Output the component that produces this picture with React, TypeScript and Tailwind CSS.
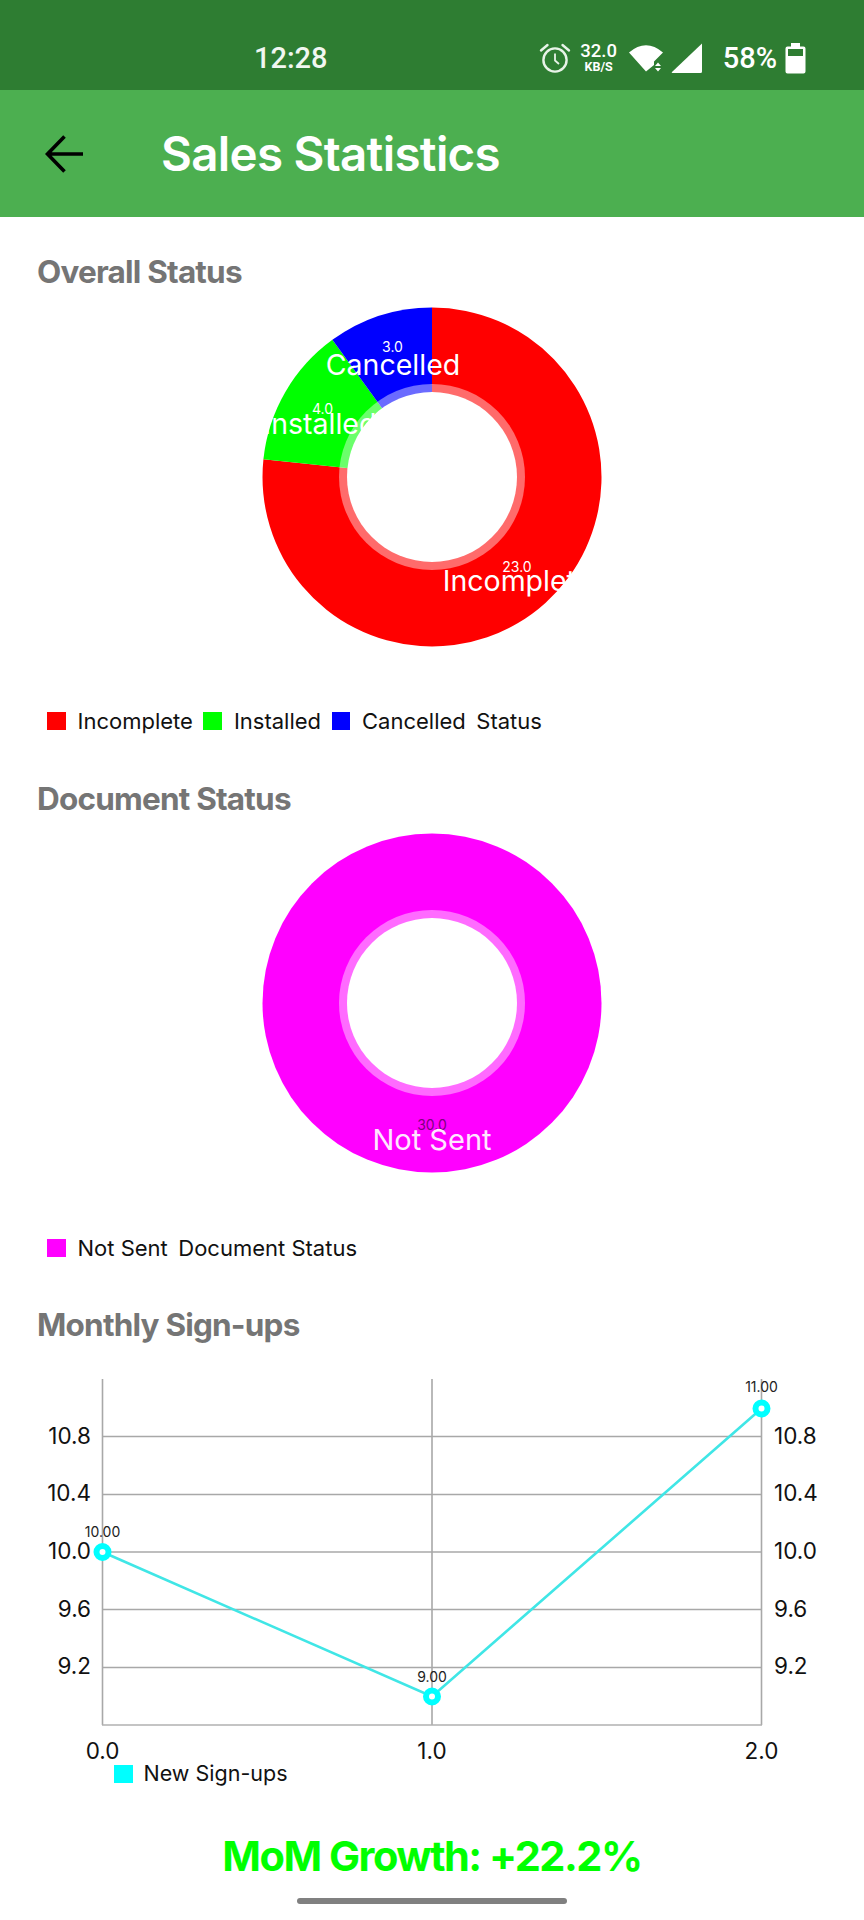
const statusFont = "font-['Roboto',sans-serif]";

function AlarmIcon() {
  return (
    <svg width="32" height="32" viewBox="0 0 32 32" fill="none" stroke="#e8f3e8" strokeWidth="2.4" className="shrink-0">
      <circle cx="16" cy="18" r="11.6" />
      <path d="M16 11.5V18.5L20 22" strokeWidth="1.8" />
      <path d="M2 8.5L8.5 3M30 8.5L23.5 3" strokeLinecap="round" />
    </svg>
  );
}

function WifiIcon() {
  return (
    <svg width="36" height="28" viewBox="0 0 36 28" fill="#fff" className="shrink-0">
      <path d="M1 8.5Q18 -6 35 8.5L26 17.5V21L18 27.5Z" />
      <path d="M30 18.5L33 22H27ZM27 24H33L30 27.5Z" />
    </svg>
  );
}

function SignalIcon() {
  return (
    <svg width="31" height="30" viewBox="0 0 31 30" fill="#fff" className="shrink-0">
      <path d="M31 0.5V28.5Q31 30 29.5 30H1.5Q0 30 1 29Z" />
    </svg>
  );
}

function BatteryIcon() {
  return (
    <svg width="21" height="31" viewBox="0 0 21 31" fill="#fff" className="shrink-0">
      <path
        fillRule="evenodd"
        d="M6 0H15V3.5H18.5Q20.5 3.5 20.5 5.5V28.5Q20.5 30.5 18.5 30.5H2.5Q0.5 30.5 0.5 28.5V5.5Q0.5 3.5 2.5 3.5H6ZM3 6V13H18V6Z"
      />
    </svg>
  );
}

function StatusBar() {
  return (
    <div className={`flex h-[90px] items-center bg-[#2e7d32] pt-[26px] pl-[254px] pr-[58px] text-white ${statusFont}`}>
      <span className="text-[29px] font-medium leading-none text-[#f1f7f1]">12:28</span>
      <div className="ml-auto flex items-center">
        <AlarmIcon />
        <div className="ml-[9px] flex w-[38px] flex-col items-center">
          <span className="text-[18.5px] font-medium leading-[15px]">32.0</span>
          <span className="mt-[2px] text-[12.5px] font-bold leading-[11px]">KB/S</span>
        </div>
        <div className="ml-[10px]">
          <WifiIcon />
        </div>
        <div className="ml-[7px]">
          <SignalIcon />
        </div>
        <span className="ml-[21px] text-[29px] font-medium leading-none">58%</span>
        <div className="ml-[8px]">
          <BatteryIcon />
        </div>
      </div>
    </div>
  );
}

function AppBar() {
  return (
    <div className="flex h-[127px] items-center bg-[#4caf50] pl-[45px]">
      <svg width="38" height="38" viewBox="0 0 38 38" fill="none" stroke="#000" strokeWidth="3.6" className="shrink-0">
        <path d="M38 19H3M19.5 1.5L2.5 19L19.5 36.5" />
      </svg>
      <h1 className="ml-[78px] text-[47.5px] font-semibold leading-none tracking-[-0.7px] text-white">
        Sales Statistics
      </h1>
    </div>
  );
}

function SectionTitle({ children }: { children: string }) {
  return <h2 className="h-[36px] pl-[37px] text-[31.5px] font-bold leading-[36px] tracking-[-0.8px] text-[#757575]">{children}</h2>;
}

interface LegendItem {
  label: string;
  color: string;
}

function Legend({ items, caption }: { items: LegendItem[]; caption: string }) {
  return (
    <div className="flex h-[24px] items-center pl-[47px] text-[22px] leading-none text-[#111]">
      {items.map((item) => (
        <div key={item.label} className="mr-[10.5px] flex items-center">
          <span className={`h-[18.5px] w-[18.5px] ${item.color}`} />
          <span className="ml-[12px]">{item.label}</span>
        </div>
      ))}
      <span>{caption}</span>
    </div>
  );
}

// slice from startDeg to endDeg, clockwise, 0 is at 3 o'clock
function slicePath(startDeg: number, endDeg: number, r: number) {
  const a = (startDeg * Math.PI) / 180;
  const b = (endDeg * Math.PI) / 180;
  const large = endDeg - startDeg > 180 ? 1 : 0;
  return `M0 0L${r * Math.cos(a)} ${r * Math.sin(a)}A${r} ${r} 0 ${large} 1 ${r * Math.cos(b)} ${r * Math.sin(b)}Z`;
}

function OverallDonut() {
  return (
    <svg viewBox="-190 -190 380 380" className="mx-auto block h-[380px] w-[380px]">
      <defs>
        <clipPath id="installedClip">
          <rect x="-167" y="-100" width="200" height="60" />
        </clipPath>
        <clipPath id="incompleteClip">
          <rect x="0" y="80" width="141" height="60" />
        </clipPath>
      </defs>
      <path d={slicePath(-90, 186, 169.5)} className="fill-[#ff0000]" />
      <path d={slicePath(186, 234, 169.5)} className="fill-[#00ff00]" />
      <path d={slicePath(234, 270, 169.5)} className="fill-[#0000ff]" />
      <g className="fill-white">
        <text x="-39.5" y="-125" textAnchor="middle" className="text-[14px]">3.0</text>
        <text x="-39" y="-102" textAnchor="middle" className="text-[28.5px]">Cancelled</text>
        <text x="-109.5" y="-63.5" textAnchor="middle" className="text-[14px]">4.0</text>
        <text x="-112" y="-43.5" textAnchor="middle" clipPath="url(#installedClip)" className="text-[28.5px]">Installed</text>
        <text x="85" y="95" textAnchor="middle" className="text-[14px]">23.0</text>
        <text x="85.5" y="114" textAnchor="middle" clipPath="url(#incompleteClip)" className="text-[28.5px]">Incomplete</text>
      </g>
      <circle r="93" className="fill-white" fillOpacity="0.42" />
      <circle r="85" className="fill-white" />
    </svg>
  );
}

function DocumentDonut() {
  return (
    <svg viewBox="-190 -190 380 380" className="mx-auto block h-[380px] w-[380px]">
      <circle r="169.5" className="fill-[#ff00ff]" />
      <text x="0" y="127" textAnchor="middle" className="fill-[#7d007d] text-[14px]">30.0</text>
      <text x="0" y="147" textAnchor="middle" className="fill-[#ffe6ff] text-[29px]">Not Sent</text>
      <circle r="93" className="fill-white" fillOpacity="0.42" />
      <circle r="85" className="fill-white" />
    </svg>
  );
}

const gridRows = [
  { label: "10.8", y: 1436.5, base: 1443.5 },
  { label: "10.4", y: 1494.5, base: 1501 },
  { label: "10.0", y: 1552, base: 1559 },
  { label: "9.6", y: 1609.5, base: 1616.7 },
  { label: "9.2", y: 1667.5, base: 1674 },
];

const points = [
  { x: 102.5, y: 1552, label: "10.00", labelY: 1536.7 },
  { x: 432, y: 1696.5, label: "9.00", labelY: 1681.7 },
  { x: 761.5, y: 1408.5, label: "11.00", labelY: 1392.3 },
];

function SignupChart() {
  return (
    <svg viewBox="0 1370 864 392" className="block h-[392px] w-full">
      {gridRows.map((row) => (
        <line key={row.label} x1="102.5" x2="761.5" y1={row.y} y2={row.y} stroke="#a8a8a8" strokeWidth="1.6" />
      ))}
      {[102.5, 432, 761.5].map((x) => (
        <line key={x} x1={x} x2={x} y1="1379" y2="1725" stroke="#a8a8a8" strokeWidth="1.6" />
      ))}
      <line x1="102" x2="762" y1="1725" y2="1725" stroke="#b0b0b0" strokeWidth="1.6" />
      <polyline
        points={points.map((p) => `${p.x},${p.y}`).join(" ")}
        fill="none"
        stroke="#40e6e6"
        strokeWidth="2.6"
      />
      {points.map((p) => (
        <circle key={p.label} cx={p.x} cy={p.y} r="6" fill="#fff" stroke="#00ffff" strokeWidth="6" />
      ))}
      {points.map((p) => (
        <text key={p.label} x={p.x} y={p.labelY} textAnchor="middle" className="fill-[#222] text-[14px]">
          {p.label}
        </text>
      ))}
      <g className="fill-[#111] text-[22.5px]">
        {gridRows.map((row) => (
          <text key={row.label} x="91" y={row.base} textAnchor="end">{row.label}</text>
        ))}
        {gridRows.map((row) => (
          <text key={row.label} x="774" y={row.base}>{row.label}</text>
        ))}
        <text x="102.5" y="1758.5" textAnchor="middle">0.0</text>
        <text x="432" y="1758.5" textAnchor="middle">1.0</text>
        <text x="761.5" y="1758.5" textAnchor="middle">2.0</text>
      </g>
    </svg>
  );
}

export default function App() {
  return (
    <div className="h-[1920px] w-[864px] overflow-hidden bg-white font-['Inter','Liberation_Sans',sans-serif]">
      <StatusBar />
      <AppBar />
      <div className="flex flex-col pt-[37px]">
        <SectionTitle>Overall Status</SectionTitle>
        <div className="-mt-[3px]">
          <OverallDonut />
        </div>
        <div className="mt-[42px]">
          <Legend
            items={[
              { label: "Incomplete", color: "bg-[#ff0000]" },
              { label: "Installed", color: "bg-[#00ff00]" },
              { label: "Cancelled", color: "bg-[#0000ff]" },
            ]}
            caption="Status"
          />
        </div>
        <div className="mt-[48px]">
          <SectionTitle>Document Status</SectionTitle>
        </div>
        <div className="-mt-[4px]">
          <DocumentDonut />
        </div>
        <div className="mt-[43px]">
          <Legend items={[{ label: "Not Sent", color: "bg-[#ff00ff]" }]} caption="Document Status" />
        </div>
        <div className="mt-[47px]">
          <SectionTitle>Monthly Sign-ups</SectionTitle>
        </div>
        <div className="mt-[27px]">
          <SignupChart />
        </div>
        <div className="flex h-[24px] items-center pl-[114px] text-[21.5px] leading-none text-[#111]">
          <span className="h-[18.5px] w-[18.5px] bg-[#00ffff]" />
          <span className="ml-[11px]">New Sign-ups</span>
        </div>
        <div className="mt-[46px] flex h-[50px] items-center justify-center text-[41.5px] font-bold leading-none tracking-[-1.5px] text-[#00ff00]">
          MoM Growth: +22.2%
        </div>
        <div className="mx-auto mt-[16px] h-[6px] w-[270px] rounded-full bg-[#808080]" />
      </div>
    </div>
  );
}
